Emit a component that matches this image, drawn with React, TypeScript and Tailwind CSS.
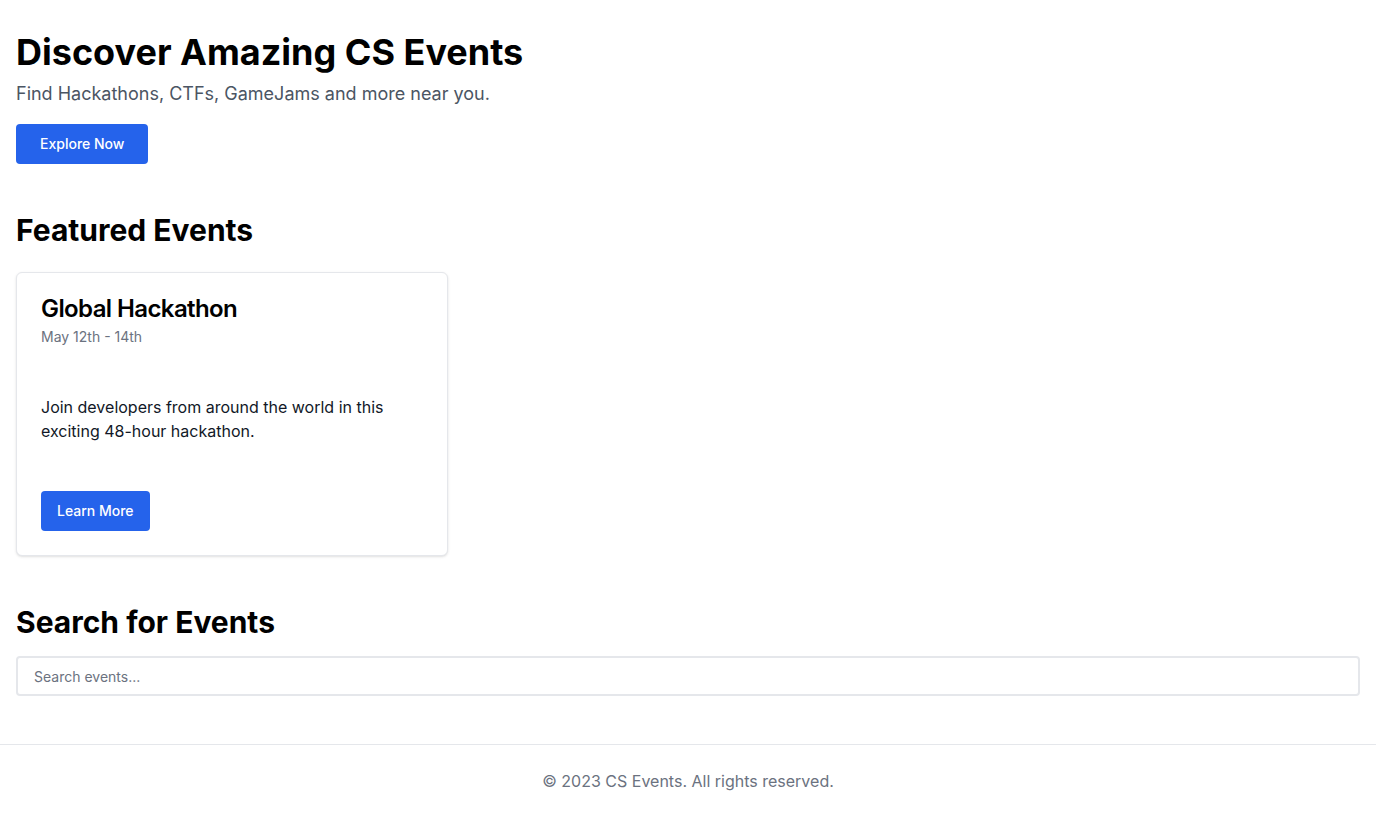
import React from 'react'

const events = [
  {
    title: 'Global Hackathon',
    date: 'May 12th - 14th',
    description: 'Join developers from around the world in this exciting 48-hour hackathon.',
  },
]

export default function App() {
  return (
    <div className="min-h-screen bg-white text-black font-['Inter','Liberation_Sans',sans-serif]">
      <main className="px-4 pt-8">
        {/* Hero */}
        <section className="mb-12">
          <h1 className="text-4xl font-bold">Discover Amazing CS Events</h1>
          <p className="mt-2 text-lg text-[#4b5563]">Find Hackathons, CTFs, GameJams and more near you.</p>
          <button className="mt-4 h-10 px-6 rounded bg-[#2563eb] text-white text-sm font-medium">
            Explore Now
          </button>
        </section>

        {/* Featured */}
        <section className="mb-12">
          <h2 className="text-3xl font-bold mb-6">Featured Events</h2>
          <div className="grid grid-cols-3 gap-6">
            {events.map((ev) => (
              <div key={ev.title} className="rounded-md border border-[#e5e7eb] bg-white shadow-sm">
                <div className="p-6 flex flex-col gap-1.5">
                  <h3 className="text-2xl font-semibold leading-none tracking-tight">{ev.title}</h3>
                  <p className="text-sm text-[#6b7280]">{ev.date}</p>
                </div>
                <div className="p-6">
                  <p className="text-base text-[#111827]">{ev.description}</p>
                </div>
                <div className="p-6">
                  <button className="h-10 px-4 rounded bg-[#2563eb] text-white text-sm font-medium">
                    Learn More
                  </button>
                </div>
              </div>
            ))}
          </div>
        </section>

        {/* Search */}
        <section className="mb-12">
          <h2 className="text-3xl font-bold mb-4">Search for Events</h2>
          <input
            type="text"
            placeholder="Search events..."
            className="w-full h-10 px-4 border-2 border-[#e5e7eb] rounded-sm text-sm placeholder:text-[#6b7280] outline-none"
          />
        </section>
      </main>

      <footer className="border-t border-[#e5e7eb] py-6 text-center text-[#6b7280]">
        © 2023 CS Events. All rights reserved.
      </footer>
    </div>
  )
}
